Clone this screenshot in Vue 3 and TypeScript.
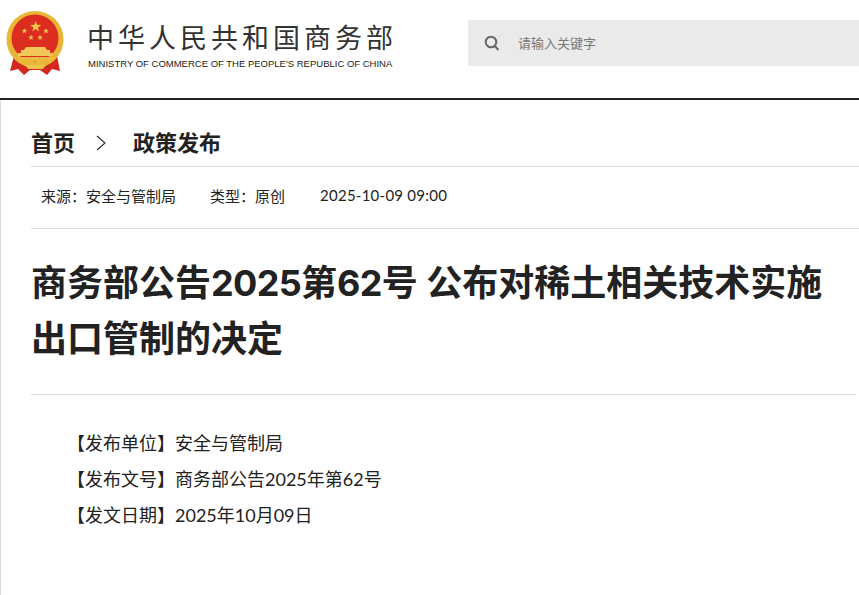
<script setup lang="ts">
const infoRows = [
  { label: '【发布单位】', value: '安全与管制局' },
  { label: '【发布文号】', value: '商务部公告2025年第62号' },
  { label: '【发文日期】', value: '2025年10月09日' }
]

// digits get tighter spacing than the CJK text around them
const titleParts = [
  { text: '商务部公告', num: false },
  { text: '2025', num: true },
  { text: '第', num: false },
  { text: '62', num: true },
  { text: '号 公布对稀土相关技术实施', num: false },
  { text: '出口管制的决定', num: false }
]

// five-point star as polygon points
function star(cx: number, cy: number, r: number): string {
  const pts: string[] = []
  for (let i = 0; i < 10; i++) {
    const rad = i % 2 === 0 ? r : r * 0.4
    const a = -Math.PI / 2 + (i * Math.PI) / 5
    pts.push(`${(cx + rad * Math.cos(a)).toFixed(2)},${(cy + rad * Math.sin(a)).toFixed(2)}`)
  }
  return pts.join(' ')
}

const stars = [
  star(35.700, 26.700, 5.800),
  star(24.500, 31, 3),
  star(46, 31, 3),
  star(31, 37.500, 3),
  star(40, 37.500, 3)
]
</script>

<template>
  <div class="page">
    <header class="top">
      <div class="brand">
        <svg class="emblem" viewBox="5 10 60 68" width="60" height="68">
          <path d="M14 56 L17 52 H54 L57 56 L60 71 L52 69 L47 75 L40 70 H30 L24 75 L18 69 L10 71 Z" fill="#d2261f" />
          <circle cx="35" cy="39.500" r="28.500" fill="#e8b535" />
          <circle cx="35" cy="38" r="23.500" fill="#dd2c20" />
          <polygon v-for="(pts, i) in stars" :key="i" :points="pts" fill="#f3c948" />
          <path d="M26 47 H45 L47 50 H50 V53 H53 V56 H18 V53 H21 V50 H24 Z" fill="#f2c85a" />
          <path d="M16 57 H55 L50 63 L46 60 L41 64 L35 61 L29 64 L24 60 L20 63 Z" fill="#eab93d" />
          <path d="M25 65 H46 L43 69 H28 Z" fill="#f0c24b" />
        </svg>
        <div class="brand-text">
          <div class="brand-cn">中华人民共和国商务部</div>
          <div class="brand-en">MINISTRY OF COMMERCE OF THE PEOPLE'S REPUBLIC OF CHINA</div>
        </div>
      </div>
      <div class="search">
        <svg class="search-icon" viewBox="0 0 16 16" width="16" height="16">
          <circle cx="7" cy="7" r="5.300" fill="none" stroke="#666" stroke-width="2" />
          <path d="M10.800 11 L14.500 15" stroke="#666" stroke-width="2" fill="none" />
        </svg>
        <span class="placeholder">请输入关键字</span>
      </div>
    </header>

    <main class="main">
      <nav class="crumbs">
        <span>首页</span>
        <svg class="chevron" viewBox="0 0 10 16" width="10" height="16">
          <path d="M1 1 L9 8 L1 15" fill="none" stroke="#333" stroke-width="1.200" />
        </svg>
        <span>政策发布</span>
      </nav>
      <div class="meta">
        <span>来源：安全与管制局</span>
        <span>类型：原创</span>
        <span class="date">2025-10-09 09:00</span>
      </div>
      <h1 class="title"><span v-for="part in titleParts" :key="part.text" :class="{ num: part.num }">{{ part.text }}</span></h1>
      <div class="info">
        <p v-for="row in infoRows" :key="row.label">{{ row.label }}{{ row.value }}</p>
      </div>
    </main>
  </div>
</template>

<style scoped>
.page {
  width: 859px;
  height: 595px;
  overflow: hidden;
  background: #fff;
  color: #222;
  font-family: Lato, "Noto Sans CJK SC", sans-serif;
}

.top {
  height: 98px;
  border-bottom: 2px solid #222;
  display: flex;
  justify-content: space-between;
  align-items: flex-start;
}

.brand {
  display: flex;
  padding: 10px 0 0 5px;
}

.emblem {
  flex: none;
}

.brand-text {
  margin-left: 23px;
}

.brand-cn {
  font-family: "Noto Sans CJK SC", sans-serif;
  font-size: 27px;
  font-weight: 400;
  line-height: 36px;
  letter-spacing: 4px;
  color: #333;
  white-space: nowrap;
  margin: 9px 0 0 -1px;
}

.brand-en {
  font-family: "Liberation Sans", sans-serif;
  font-size: 9.500px;
  line-height: 16px;
  margin-top: 1px;
  color: #222;
  white-space: nowrap;
}

.search {
  width: 391px;
  height: 46px;
  margin-top: 20px;
  background: #eaeaea;
  display: flex;
  align-items: center;
  padding: 0 0 1px 16px;
  box-sizing: border-box;
}

.search-icon {
  flex: none;
}

.placeholder {
  margin-left: 18px;
  font-family: "Noto Sans CJK SC", sans-serif;
  font-size: 13px;
  color: #777;
}

.main {
  border-left: 1px solid #ddd;
  padding-left: 30px;
  height: 495px;
}

.crumbs {
  height: 67px;
  box-sizing: border-box;
  padding-top: 19px;
  border-bottom: 1px solid #ddd;
  display: flex;
  align-items: center;
  font-size: 22px;
  font-weight: 700;
  line-height: 30px;
}

.chevron {
  margin: 0 27px 0 21px;
}

.meta {
  height: 62px;
  box-sizing: border-box;
  padding: 0 0 5px 10px;
  border-bottom: 1px solid #ddd;
  display: flex;
  align-items: center;
  gap: 34px;
  font-size: 15px;
}

.date {
  margin-left: 1px;
  letter-spacing: 0.250px;
}

.title {
  margin: 0;
  width: 825px;
  padding: 26px 0 27px;
  border-bottom: 1px solid #ddd;
  font-family: Inter, "Noto Sans CJK SC", sans-serif;
  font-size: 36px;
  line-height: 56px;
  font-weight: 700;
}

.num {
  letter-spacing: -0.650px;
}

.info {
  padding: 30px 0 0 36px;
  font-size: 18px;
  line-height: 36px;
}

.info p {
  margin: 0;
}
</style>
